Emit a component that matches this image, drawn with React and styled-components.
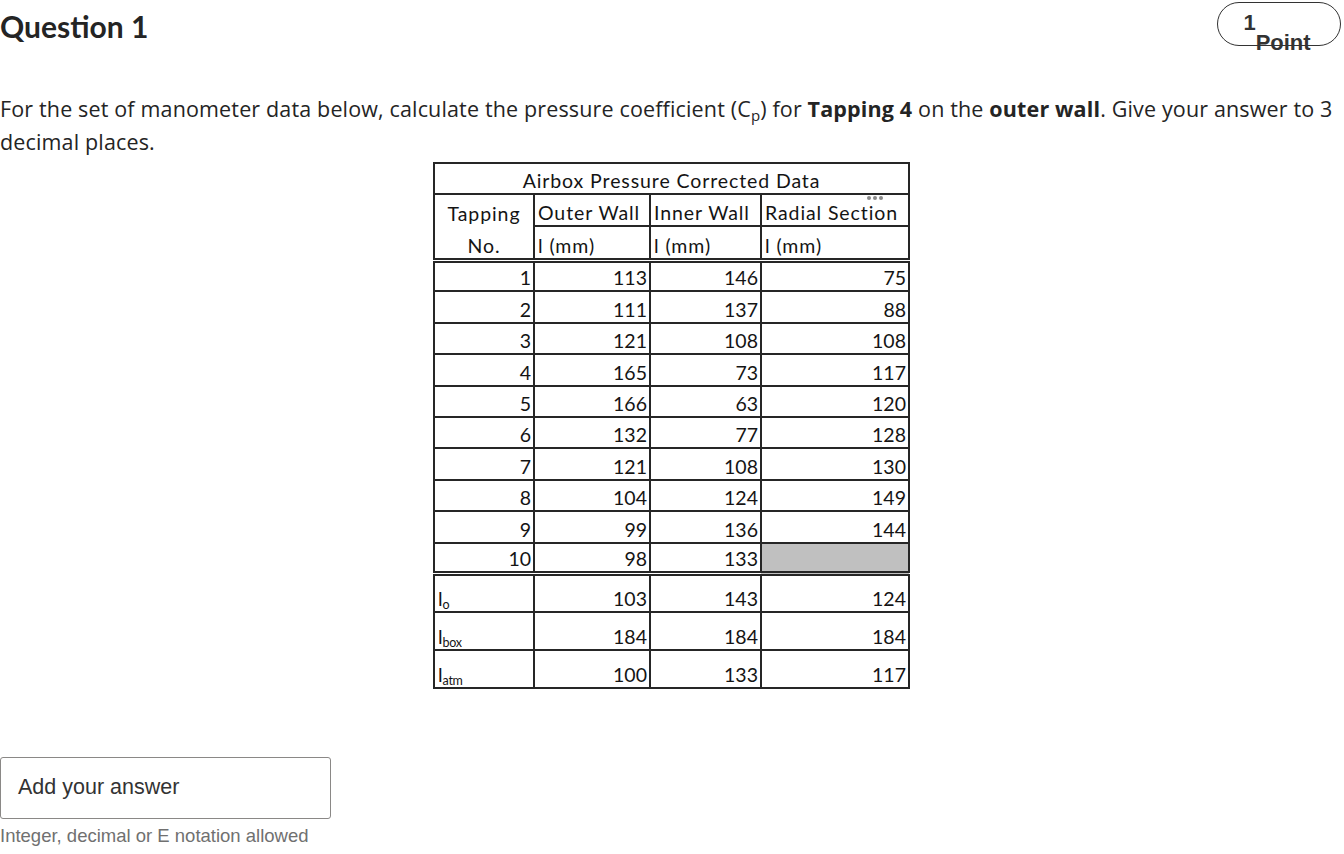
import React from "react";
import styled, { createGlobalStyle } from "styled-components";

const Global = createGlobalStyle`
  html, body { margin: 0; padding: 0; background: #fff; }
  body { font-family: "Open Sans", sans-serif; color: #242424; }
`;

const Page = styled.div`
  width: 1344px;
  display: flex;
  flex-direction: column;
`;

const Header = styled.div`
  display: flex;
  justify-content: space-between;
  align-items: flex-start;
  padding-right: 3px;
`;

const Title = styled.h1`
  margin: 8px 0 0 0;
  font-family: "Lato", sans-serif;
  font-weight: 700;
  font-size: 30px;
  line-height: 36px;
  color: #242424;
`;

const PointPill = styled.div`
  margin-top: 2px;
  width: 124px;
  height: 44px;
  box-sizing: border-box;
  border: 1.5px solid #333;
  border-radius: 22px;
  font-family: "Liberation Sans", Arial, sans-serif;
  font-weight: 700;
  font-size: 22px;
  line-height: 21px;
  color: #333;
  display: flex;
  justify-content: center;
  align-items: flex-start;
  padding-top: 9px;
  padding-right: 4px;
`;

const PointSub = styled.span`
  margin-top: 20px;
`;

const Prompt = styled.p`
  margin: 46px 0 0 0;
  font-family: "Open Sans", sans-serif;
  font-size: 21.5px;
  line-height: 33px;
  color: #242424;
  letter-spacing: 0.15px;
`;

const Sub = styled.sub`
  font-size: 15px;
  line-height: 0;
  vertical-align: -4px;
`;

const Strong = styled.b`
  font-weight: 700;
`;

const TableWrap = styled.div`
  position: relative;
  align-self: flex-start;
  margin: 4px 0 0 433px;
`;

const DataTable = styled.table`
  border-collapse: collapse;
  font-family: "Lato", sans-serif;
  font-size: 19.5px;
  color: #141414;
  border: 2px solid #222;
  table-layout: fixed;
`;

const Cell = styled.td`
  border: 2px solid #262626;
  height: ${(p) => p.$h || 31}px;
  padding: 0 ${(p) => (p.$align === "right" || !p.$align ? 2 : 3)}px 0 3px;
  text-align: ${(p) => p.$align || "right"};
  vertical-align: bottom;
  line-height: 25px;
  letter-spacing: ${(p) => (p.$text ? "0.9px" : "0")};
  background: ${(p) => (p.$grey ? "#c0c0c0" : "#fff")};
  border-bottom-style: ${(p) => (p.$double ? "double" : "solid")};
  border-bottom-width: ${(p) => (p.$double ? "5px" : "2px")};
  box-sizing: border-box;
  white-space: nowrap;
`;

const LabelSub = styled.sub`
  font-size: 12.5px;
  vertical-align: -3px;
  line-height: 0;
  letter-spacing: -0.3px;
`;

const Dots = styled.div`
  position: absolute;
  left: 434px;
  top: 34px;
  display: flex;
  gap: 2px;
`;

const Dot = styled.span`
  width: 4px;
  height: 4px;
  border-radius: 50%;
  background: #8a8a8a;
`;

const AnswerBox = styled.div`
  margin-top: 68px;
  width: 331px;
  height: 62px;
  box-sizing: border-box;
  border: 1px solid #8a8886;
  border-radius: 3px;
  display: flex;
  align-items: center;
  padding-left: 17px;
  font-family: "Liberation Sans", Arial, sans-serif;
  font-size: 21.5px;
  color: #333;
`;

const Hint = styled.div`
  margin-top: 6px;
  font-family: "Liberation Sans", Arial, sans-serif;
  font-size: 18.5px;
  color: #707070;
`;

const rows = [
  [1, 113, 146, 75],
  [2, 111, 137, 88],
  [3, 121, 108, 108],
  [4, 165, 73, 117],
  [5, 166, 63, 120],
  [6, 132, 77, 128],
  [7, 121, 108, 130],
  [8, 104, 124, 149],
  [9, 99, 136, 144],
  [10, 98, 133, null],
];

const refs = [
  ["o", 103, 143, 124],
  ["box", 184, 184, 184],
  ["atm", 100, 133, 117],
];

export default function App() {
  return (
    <>
      <Global />
      <Page>
        <Header>
          <Title>Question 1</Title>
          <PointPill>
            <span>1</span>
            <PointSub>Point</PointSub>
          </PointPill>
        </Header>
        <Prompt>
          For the set of manometer data below, calculate the pressure coefficient (C
          <Sub>p</Sub>) for <Strong>Tapping 4</Strong> on the <Strong>outer wall</Strong>. Give
          your answer to 3 decimal places.
        </Prompt>
        <TableWrap>
          <DataTable>
            <colgroup>
              <col style={{ width: 100 }} />
              <col style={{ width: 116 }} />
              <col style={{ width: 111 }} />
              <col style={{ width: 148 }} />
            </colgroup>
            <tbody>
              <tr>
                <Cell colSpan={4} $align="center" $h={31} $text>
                  Airbox Pressure Corrected Data
                </Cell>
              </tr>
              <tr>
                <Cell $align="center" $h={32} $text style={{ borderBottom: "none" }}>
                  Tapping
                </Cell>
                <Cell $align="left" $h={32} $text>Outer Wall</Cell>
                <Cell $align="left" $h={32} $text>Inner Wall</Cell>
                <Cell $align="left" $h={32} $text>Radial Section</Cell>
              </tr>
              <tr>
                <Cell $align="center" $h={34} $text $double style={{ borderTop: "none" }}>
                  No.
                </Cell>
                <Cell $align="left" $h={34} $text $double>l (mm)</Cell>
                <Cell $align="left" $h={34} $text $double>l (mm)</Cell>
                <Cell $align="left" $h={34} $text $double>l (mm)</Cell>
              </tr>
              {rows.map((r, i) => (
                <tr key={r[0]}>
                  {r.map((v, j) => (
                    <Cell key={j} $h={31.4} $double={i === rows.length - 1} $grey={v === null}>
                      {v}
                    </Cell>
                  ))}
                </tr>
              ))}
              {refs.map((r) => (
                <tr key={r[0]}>
                  <Cell $align="left" $h={38}>
                    l<LabelSub>{r[0]}</LabelSub>
                  </Cell>
                  <Cell $h={38}>{r[1]}</Cell>
                  <Cell $h={38}>{r[2]}</Cell>
                  <Cell $h={38}>{r[3]}</Cell>
                </tr>
              ))}
            </tbody>
          </DataTable>
          <Dots>
            <Dot />
            <Dot />
            <Dot />
          </Dots>
        </TableWrap>
        <AnswerBox>Add your answer</AnswerBox>
        <Hint>Integer, decimal or E notation allowed</Hint>
      </Page>
    </>
  );
}
